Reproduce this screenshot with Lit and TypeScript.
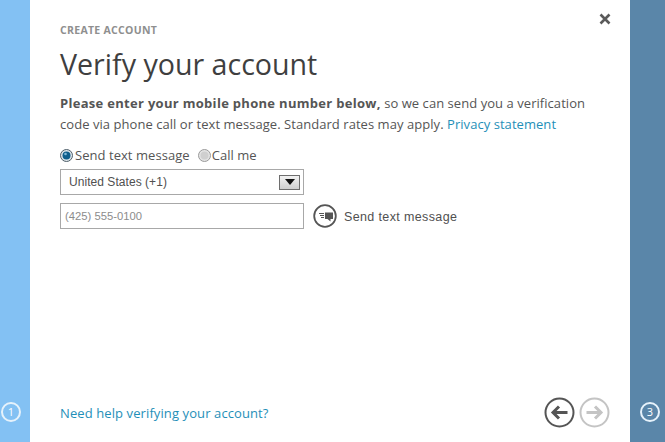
import { LitElement, html, css } from 'lit';
import { customElement } from 'lit/decorators.js';

@customElement('app-root')
export class AppRoot extends LitElement {
  static styles = css`
    :host {
      display: grid;
      grid-template-columns: 30px 600px 35px;
      height: 100vh;
      overflow: hidden;
      font-family: 'Open Sans', 'Noto Sans', sans-serif;
      color: #505050;
    }

    .rail {
      display: flex;
      align-items: flex-end;
      justify-content: center;
      padding-bottom: 20px;
      box-sizing: border-box;
    }
    .rail.left { background: #83c1f3; padding-right: 8px; }
    .rail.right { background: #5a86a9; padding-left: 5px; }

    .step {
      width: 20px;
      height: 20px;
      border: 2px solid #e6f2fb;
      border-radius: 50%;
      box-sizing: border-box;
      color: #fff;
      font-size: 11px;
      line-height: 16px;
      text-align: center;
    }

    .panel {
      position: relative;
      background: #fff;
      display: flex;
      flex-direction: column;
      padding: 23px 20px 14px 30px;
      box-sizing: border-box;
    }

    .close {
      position: absolute;
      top: 13px;
      right: 19px;
      width: 12px;
      height: 12px;
    }

    .crumb {
      font-size: 10.5px;
      line-height: 14px;
      font-weight: 700;
      letter-spacing: 0.3px;
      color: #8f8f8f;
    }

    h1 {
      margin: 7px 0 0;
      font-size: 28.6px;
      line-height: 40px;
      font-weight: 400;
      color: #3f3f3f;
    }

    .intro {
      margin: 9px 0 0;
      width: 530px;
      font-size: 13px;
      line-height: 21px;
      letter-spacing: 0.05px;
      color: #555;
    }
    .intro b { font-weight: 700; letter-spacing: 0.3px; }

    a { color: #1f8fb8; text-decoration: none; }

    .radios {
      display: flex;
      align-items: center;
      margin-top: 11px;
      height: 18px;
      font-size: 13px;
      letter-spacing: 0.05px;
      color: #555;
    }
    .radio {
      width: 13px;
      height: 13px;
      margin-right: 2px;
      flex: none;
    }
    .radios .second { margin-left: 8px; margin-right: 1px; }

    .select, .input {
      width: 244px;
      height: 26px;
      box-sizing: border-box;
      border: 1px solid #a8a8a8;
      display: flex;
      align-items: center;
      font-family: 'Liberation Sans', Arial, sans-serif;
      font-size: 12px;
    }
    .select {
      margin-top: 5px;
      padding: 0 3px 0 8px;
      justify-content: space-between;
      letter-spacing: 0.05px;
      color: #505050;
    }
    .arrow {
      width: 21px;
      height: 15px;
      box-sizing: border-box;
      border: 1px solid #6e6e6e;
      background: linear-gradient(#f2f2f2, #cfcfcf);
      display: flex;
      align-items: center;
      justify-content: center;
    }
    .arrow i {
      width: 0;
      height: 0;
      border-left: 5px solid transparent;
      border-right: 5px solid transparent;
      border-top: 6px solid #111;
    }

    .phone-row {
      display: flex;
      align-items: center;
      margin-top: 8px;
    }
    .input {
      padding-left: 4px;
      font-size: 11.25px;
      color: #8c8c8c;
    }
    .send {
      display: flex;
      align-items: center;
      margin-left: 9px;
      font-family: 'Liberation Sans', Arial, sans-serif;
      font-size: 12.5px;
      letter-spacing: 0.37px;
      color: #505050;
    }
    .send svg { width: 24px; height: 24px; margin-right: 7px; }
    .send span { padding-top: 1px; }

    .footer {
      margin-top: auto;
      display: flex;
      align-items: center;
      justify-content: space-between;
      font-size: 13px;
      letter-spacing: 0.1px;
    }
    .nav { display: flex; gap: 4px; }
    .nav svg { width: 31px; height: 31px; display: block; }
  `;

  render() {
    return html`
      <div class="rail left"><span class="step">1</span></div>
      <main class="panel">
        <svg class="close" viewBox="0 0 12 12">
          <path d="M1.5 1.5 10.5 10.5M10.5 1.5 1.5 10.5" stroke="#5a5a5a" stroke-width="2.6" />
        </svg>
        <div class="crumb">CREATE ACCOUNT</div>
        <h1>Verify your account</h1>
        <p class="intro">
          <b>Please enter your mobile phone number below,</b> so we can send you a verification
          code via phone call or text message. Standard rates may apply.
          <a href="#">Privacy statement</a>
        </p>
        <div class="radios">
          <svg class="radio" viewBox="0 0 13 13">
            <circle cx="6.5" cy="6.5" r="6" fill="#dfe6ea" stroke="#4f5f6a" />
            <circle cx="6.5" cy="6.5" r="4" fill="#0f5f8c" />
            <circle cx="5.5" cy="5" r="1.3" fill="#7fb8d8" />
          </svg>
          <span>Send text message</span>
          <svg class="radio second" viewBox="0 0 13 13">
            <circle cx="6.5" cy="6.5" r="6" fill="#e4e4e4" stroke="#9a9a9a" />
            <circle cx="6.5" cy="6.5" r="4" fill="#cfcfcf" />
          </svg>
          <span>Call me</span>
        </div>
        <div class="select">
          <span>United States (+1)</span>
          <span class="arrow"><i></i></span>
        </div>
        <div class="phone-row">
          <div class="input">(425) 555-0100</div>
          <div class="send">
            <svg viewBox="0 0 24 24">
              <circle cx="12" cy="12" r="10.8" fill="none" stroke="#555" stroke-width="1.8" />
              <path d="M12 8.5h8v6.5h-2.5v2.5l-3-2.5H12z" fill="#555" />
              <path d="M6 9.5h5M7 11.5h4M8 13.5h3" stroke="#555" stroke-width="1" fill="none" />
            </svg>
            <span>Send text message</span>
          </div>
        </div>
        <div class="footer">
          <a href="#">Need help verifying your account?</a>
          <div class="nav">
            <svg viewBox="0 0 31 31">
              <circle cx="15.5" cy="15.5" r="14" fill="none" stroke="#555" stroke-width="2" />
              <path d="M23.5 15.5H9M15 9.5l-6 6 6 6" fill="none" stroke="#555" stroke-width="3" />
            </svg>
            <svg viewBox="0 0 31 31">
              <circle cx="15.5" cy="15.5" r="14" fill="none" stroke="#c4c4c4" stroke-width="2" />
              <path d="M7.5 15.5H22M16 9.5l6 6-6 6" fill="none" stroke="#c4c4c4" stroke-width="3" />
            </svg>
          </div>
        </div>
      </main>
      <div class="rail right"><span class="step">3</span></div>
    `;
  }
}

declare global {
  interface HTMLElementTagNameMap {
    'app-root': AppRoot;
  }
}
